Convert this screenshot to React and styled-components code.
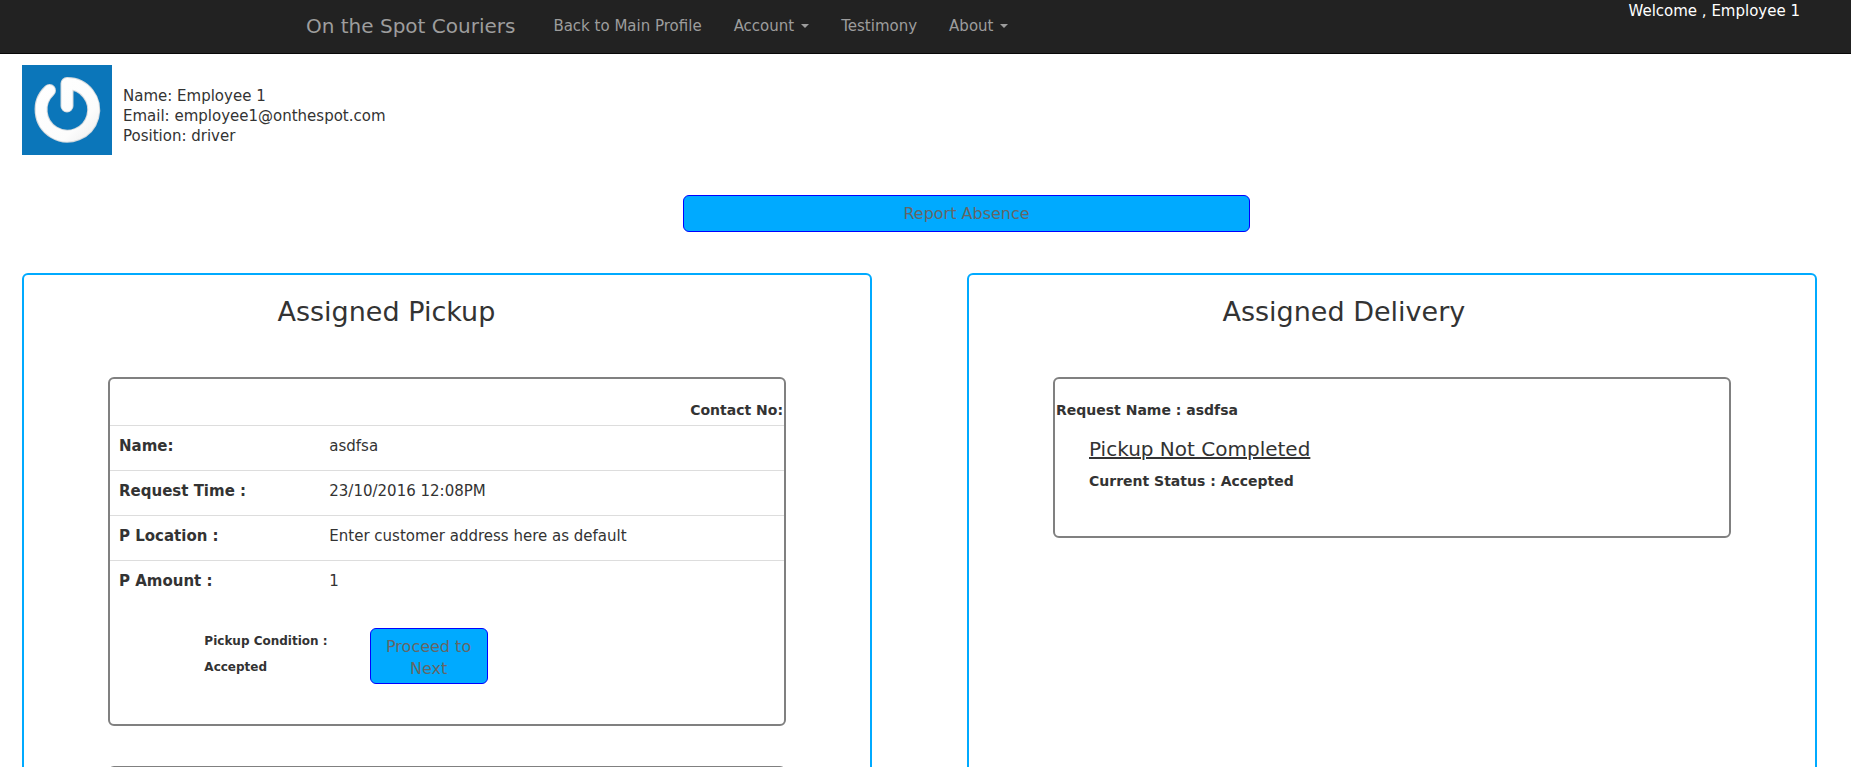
import React from "react";
import styled, { createGlobalStyle } from "styled-components";

const GlobalStyle = createGlobalStyle`
  * { box-sizing: border-box; }
  body {
    margin: 0;
    background: #fff;
    color: #333;
    font: 15px/20px Verdana, "DejaVu Sans", sans-serif;
  }
  h2, h3, h4, h5, p { margin: 0; padding: 0; }
`;

const NavBar = styled.header`
  display: flex;
  align-items: flex-start;
  justify-content: space-between;
  min-height: 54px;
  padding: 0 51px 0 306px;
  background: #222;
  border-bottom: 1px solid #080808;
`;

const NavMenu = styled.nav`
  display: flex;
  align-items: center;
  gap: 32px;
  min-height: 52px;
`;

const Brand = styled.a`
  margin-right: 6px;
  color: #9d9d9d;
  font-size: 20px;
  line-height: 24px;
  text-decoration: none;
`;

const NavLink = styled.a`
  display: inline-flex;
  align-items: center;
  gap: 7px;
  color: #9d9d9d;
  text-decoration: none;
`;

const Caret = styled.span`
  border-top: 4px solid currentColor;
  border-left: 4px solid transparent;
  border-right: 4px solid transparent;
`;

const Welcome = styled.p`
  padding-top: 1px;
  color: #fff;
`;

const Page = styled.main`
  padding: 11px 34px 40px 22px;
`;

const Profile = styled.section`
  display: flex;
  align-items: center;
  gap: 11px;
`;

const Avatar = styled.svg`
  flex: none;
  width: 90px;
  height: 90px;
`;

const ProfileLines = styled.div`
  padding-top: 12px;
`;

const ActionButton = styled.button`
  width: ${(p) => p.$width};
  padding: ${(p) => p.$padding};
  border: 1px solid #00f;
  border-radius: 6px;
  background: #0af;
  color: #666;
  font: inherit;
  font-size: 16px;
  line-height: 22px;
  cursor: pointer;
`;

const AbsenceBar = styled.div`
  display: flex;
  justify-content: center;
  padding: 40px 0 41px 94px;
`;

const Columns = styled.div`
  display: grid;
  grid-template-columns: 1fr 1fr;
  gap: 95px;
`;

const Panel = styled.section`
  display: flex;
  flex-direction: column;
  gap: 40px;
  padding: 20px calc(10% - 1px) 40px;
  border: 2px solid #0af;
  border-radius: 6px;
`;

const PanelTitle = styled.h2`
  padding: 0 0 8px 25%;
  font-size: 27px;
  line-height: 34px;
  font-weight: 400;
`;

const Card = styled.article`
  min-height: 161px;
  border: 2px solid #808080;
  border-radius: 6px;
`;

const CardHeading = styled.h4`
  padding: 21px 1px 5px;
  font-size: 14px;
  line-height: 20px;
  text-align: ${(p) => p.$align || "left"};
`;

const Details = styled.table`
  width: 100%;
  border-collapse: collapse;
  table-layout: fixed;

  th, td {
    padding: 10px 9px 14px;
    border-top: 1px solid #ddd;
    text-align: left;
    vertical-align: top;
  }

  th { width: 31.2%; }
`;

const ConditionRow = styled.div`
  display: flex;
  align-items: flex-start;
  gap: 42px;
  padding: 23px 0 40px 14%;
`;

const Condition = styled.h5`
  display: flex;
  flex-direction: column;
  gap: 6px;
  padding-top: 3px;
  font-size: 12px;
  line-height: 20px;
`;

const DeliveryBody = styled.div`
  padding: 12px 34px 40px;
`;

const DeliveryState = styled.h3`
  font-size: 20px;
  line-height: 24px;
  font-weight: 400;
  text-decoration: underline;
  text-decoration-thickness: 2px;
`;

const DeliveryStatus = styled.h4`
  padding-top: 10px;
  font-size: 14px;
  line-height: 20px;
`;

const navLinks = [
  { label: "Back to Main Profile" },
  { label: "Account", menu: true },
  { label: "Testimony" },
  { label: "About", menu: true },
];

const pickupDetails = [
  ["Name:", "asdfsa"],
  ["Request Time :", "23/10/2016 12:08PM"],
  ["P Location :", "Enter customer address here as default"],
  ["P Amount :", "1"],
];

const POWER_SHAPE = "M27.500 25.500A26.300 26.300 0 1 0 45 18.500V41";

function PowerAvatar() {
  return (
    <Avatar viewBox="0 0 90 90" role="img" aria-label="Employee avatar">
      <defs>
        <linearGradient id="tube" x1="0" y1="0" x2="1" y2="1">
          <stop offset="0" stopColor="#fff" />
          <stop offset="0.75" stopColor="#fcfcfc" />
          <stop offset="1" stopColor="#f0f0f0" />
        </linearGradient>
      </defs>
      <rect width="90" height="90" fill="#0b76ba" />
      <g fill="none" strokeLinecap="round" strokeLinejoin="round">
        <path d={POWER_SHAPE} stroke="#d3d9dd" strokeWidth="13" />
        <path d={POWER_SHAPE} stroke="url(#tube)" strokeWidth="11" />
      </g>
    </Avatar>
  );
}

export default function App() {
  return (
    <>
      <GlobalStyle />
      <NavBar>
        <NavMenu>
          <Brand href="#">On the Spot Couriers</Brand>
          {navLinks.map(({ label, menu }) => (
            <NavLink href="#" key={label}>
              {label}
              {menu && <Caret />}
            </NavLink>
          ))}
        </NavMenu>
        <Welcome>Welcome , Employee 1</Welcome>
      </NavBar>
      <Page>
        <Profile>
          <PowerAvatar />
          <ProfileLines>
            <p>Name: Employee 1</p>
            <p>Email: employee1@onthespot.com</p>
            <p>Position: driver</p>
          </ProfileLines>
        </Profile>
        <AbsenceBar>
          <ActionButton type="button" $width="33.33%" $padding="7px 12px 6px">
            Report Absence
          </ActionButton>
        </AbsenceBar>
        <Columns>
          <Panel>
            <PanelTitle>Assigned Pickup</PanelTitle>
            <Card>
              <CardHeading $align="right">Contact No:</CardHeading>
              <Details>
                <tbody>
                  {pickupDetails.map(([label, value]) => (
                    <tr key={label}>
                      <th scope="row">{label}</th>
                      <td>{value}</td>
                    </tr>
                  ))}
                </tbody>
              </Details>
              <ConditionRow>
                <Condition>
                  <span>Pickup Condition :</span>
                  <span>Accepted</span>
                </Condition>
                <ActionButton type="button" $width="118px" $padding="7px 12px 3px">
                  Proceed to Next
                </ActionButton>
              </ConditionRow>
            </Card>
            <Card />
          </Panel>
          <Panel>
            <PanelTitle>Assigned Delivery</PanelTitle>
            <Card>
              <CardHeading>Request Name : asdfsa</CardHeading>
              <DeliveryBody>
                <DeliveryState>Pickup Not Completed</DeliveryState>
                <DeliveryStatus>Current Status : Accepted</DeliveryStatus>
              </DeliveryBody>
            </Card>
          </Panel>
        </Columns>
      </Page>
    </>
  );
}
